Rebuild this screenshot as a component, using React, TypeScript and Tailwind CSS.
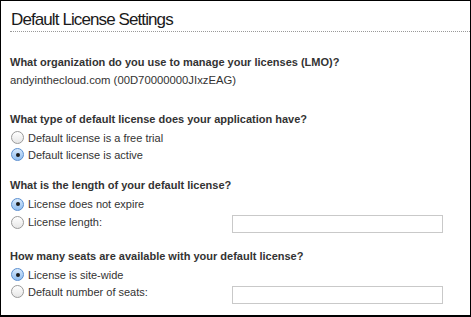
import React from "react";

function Radio({ checked }: { checked?: boolean }) {
  return (
    <span
      className={
        "relative inline-flex h-[13px] w-[13px] shrink-0 items-center justify-center rounded-full border " +
        (checked
          ? "border-[#5b8fd0] bg-gradient-to-b from-[#d6e8fb] to-[#8fbdf0]"
          : "border-[#9a9a9a] bg-gradient-to-b from-[#ffffff] to-[#e6e6e6]")
      }
    >
      {checked && <span className="h-[4px] w-[4px] rounded-full bg-[#1a1a1a]" />}
    </span>
  );
}

function Option({
  checked,
  label,
  input,
  rowClass,
  inputClass,
}: {
  checked?: boolean;
  label: string;
  input?: boolean;
  rowClass: string;
  inputClass?: string;
}) {
  return (
    <div className={"flex items-start " + rowClass}>
      <div className="flex h-full w-[221px] items-center gap-[4px]">
        <Radio checked={checked} />
        <span className="text-[11px] leading-[14px] text-[#333]">{label}</span>
      </div>
      {input && <div className={"h-[18px] w-[211px] border border-[#c9c9c9] bg-white " + (inputClass ?? "")} />}
    </div>
  );
}

export default function App() {
  return (
    <div
      className="h-[317px] w-[471px] overflow-hidden border border-b-2 border-black bg-white"
      style={{ fontFamily: '"Liberation Sans", Arial, sans-serif' }}
    >
      <div className="pl-[10px] pt-[8px]">
        <div className="text-[17px] leading-[22px] tracking-[-0.9px] text-[#1a1a1a]">Default License Settings</div>
      </div>
      <div className="ml-[9px] border-b border-dotted border-[#999]" />
      <div className="pl-[9px] pt-[22px] text-[#333]">
        <div className="text-[11px] font-bold leading-[16px]">
          What organization do you use to manage your licenses (LMO)?
        </div>
        <div className="mt-[2px] text-[11.3px] leading-[16px]">andyinthecloud.com (00D70000000JIxzEAG)</div>
      </div>
      <div className="pl-[9px] pt-[23px] text-[11px] font-bold leading-[16px] text-[#333]">
        What type of default license does your application have?
      </div>
      <div className="mt-[2px] pl-[10px]">
        <Option rowClass="h-[17px]" label="Default license is a free trial" />
        <Option rowClass="h-[17px]" checked label="Default license is active" />
      </div>
      <div className="pl-[9px] pt-[14px] text-[11px] font-bold leading-[16px] text-[#333]">
        What is the length of your default license?
      </div>
      <div className="mt-[2px] pl-[10px]">
        <Option rowClass="h-[18px]" checked label="License does not expire" />
        <Option rowClass="h-[18px]" label="License length:" input inputClass="mt-[2px]" />
      </div>
      <div className="pl-[9px] pt-[17px] text-[11px] font-bold leading-[16px] text-[#333]">
        How many seats are available with your default license?
      </div>
      <div className="mt-[2px] pl-[10px]">
        <Option rowClass="h-[17px]" checked label="License is site-wide" />
        <Option rowClass="h-[17px]" label="Default number of seats:" input inputClass="mt-[3px]" />
      </div>
    </div>
  );
}
